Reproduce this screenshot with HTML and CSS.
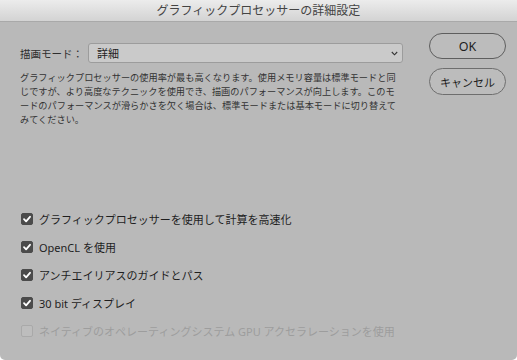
FILE: index.html
```html
<!DOCTYPE html>
<html lang="ja">
<head>
  <meta charset="UTF-8">
  <title>グラフィックプロセッサーの詳細設定</title>
  <link rel="stylesheet" href="styles.css">
</head>
<body>
  <div class="window">
    <div class="titlebar">グラフィックプロセッサーの詳細設定</div>

    <div class="content">
      <div class="top">
        <div class="main">
          <div class="mode-row">
            <span class="mode-label">描画モード：</span>
            <div class="select">
              <span>詳細</span>
              <svg class="chevron" width="7" height="5" viewBox="0 0 7 5"><polyline points="0.8,1 3.5,3.8 6.2,1" fill="none" stroke="#333" stroke-width="1.1"/></svg>
            </div>
          </div>
          <p class="desc">グラフィックプロセッサーの使用率が最も高くなります。使用メモリ容量は標準モードと同<br>じですが、より高度なテクニックを使用でき、描画のパフォーマンスが向上します。このモ<br>ードのパフォーマンスが滑らかさを欠く場合は、標準モードまたは基本モードに切り替えて<br>みてください。</p>
        </div>

        <div class="buttons">
          <button class="btn btn-ok">OK</button>
          <button class="btn">キャンセル</button>
        </div>
      </div>

      <ul class="options">
        <li class="option"><span class="check on"><svg width="12" height="12" viewBox="0 0 12 12"><polyline points="3,6.2 5.1,8.3 9,3.8" fill="none" stroke="#fff" stroke-width="1.8" stroke-linecap="round" stroke-linejoin="round"/></svg></span>グラフィックプロセッサーを使用して計算を高速化</li>
        <li class="option"><span class="check on"><svg width="12" height="12" viewBox="0 0 12 12"><polyline points="3,6.2 5.1,8.3 9,3.8" fill="none" stroke="#fff" stroke-width="1.8" stroke-linecap="round" stroke-linejoin="round"/></svg></span>OpenCL を使用</li>
        <li class="option"><span class="check on"><svg width="12" height="12" viewBox="0 0 12 12"><polyline points="3,6.2 5.1,8.3 9,3.8" fill="none" stroke="#fff" stroke-width="1.8" stroke-linecap="round" stroke-linejoin="round"/></svg></span>アンチエイリアスのガイドとパス</li>
        <li class="option"><span class="check on"><svg width="12" height="12" viewBox="0 0 12 12"><polyline points="3,6.2 5.1,8.3 9,3.8" fill="none" stroke="#fff" stroke-width="1.8" stroke-linecap="round" stroke-linejoin="round"/></svg></span>30 bit ディスプレイ</li>
        <li class="option disabled"><span class="check"></span>ネイティブのオペレーティングシステム GPU アクセラレーションを使用</li>
      </ul>
    </div>
  </div>
</body>
</html>
```

FILE: styles.css
```css
body {
  margin: 0;
  padding: 0;
  background-color: #fff;
  font-family: "Noto Sans", "Noto Sans CJK JP", sans-serif;
  color: #262626;
}

.window {
  width: 517px;
  height: 360px;
  background-color: #b9b9b9;
  border-radius: 0 0 5px 5px;
  overflow: hidden;
}

.titlebar {
  height: 21px;
  line-height: 21px;
  text-align: center;
  font-size: 12px;
  color: #444;
  background: linear-gradient(#ececec, #d3d3d3);
  border-bottom: 1px solid #a9a9a9;
}

.content {
  padding: 0 11px 0 20px;
}

.top {
  display: flex;
  padding-top: 11px;
}

.main {
  width: 383px;
  margin-top: 10px;
}

.mode-row {
  display: flex;
  align-items: center;
  height: 20px;
}

.mode-label {
  width: 68px;
  font-size: 10.5px;
  color: #2e2e2e;
}

.select {
  flex: 1;
  height: 20px;
  box-sizing: border-box;
  display: flex;
  align-items: center;
  justify-content: space-between;
  padding: 0 4px 0 8px;
  background-color: #cacaca;
  border: 1px solid #9c9c9c;
  border-radius: 3px;
  font-size: 11px;
  color: #1e1e1e;
}

.chevron {
  margin-top: 1px;
}

.desc {
  margin: 8px 0 0;
  font-size: 9.2px;
  line-height: 14px;
  color: #333;
  white-space: nowrap;
}

.buttons {
  display: flex;
  flex-direction: column;
  gap: 9px;
  margin-left: 26px;
}

.btn {
  width: 77px;
  height: 27px;
  border: 1px solid #6e6e6e;
  border-radius: 14px;
  background-color: #bcbcbc;
  font-family: "Noto Sans", "Noto Sans CJK JP", sans-serif;
  font-size: 11px;
  color: #1e1e1e;
  padding: 0;
}

.btn-ok {
  height: 26px;
  font-size: 12.5px;
  border-color: #5e5e5e;
}

.options {
  list-style: none;
  margin: 78px 0 0;
  padding: 0;
}

.option {
  display: flex;
  align-items: center;
  gap: 6px;
  height: 28px;
  font-size: 11px;
  color: #1e1e1e;
}

.check {
  width: 12px;
  height: 12px;
  margin-left: 1px;
  box-sizing: border-box;
  border-radius: 2px;
  border: 1px solid #a9a9a9;
  background-color: #bdbdbd;
}

.check svg {
  display: block;
  margin: -1px;
}

.check.on {
  background-color: #4b4b4b;
  border-color: #4b4b4b;
}

.option.disabled {
  color: #9d9d9d;
}
```
